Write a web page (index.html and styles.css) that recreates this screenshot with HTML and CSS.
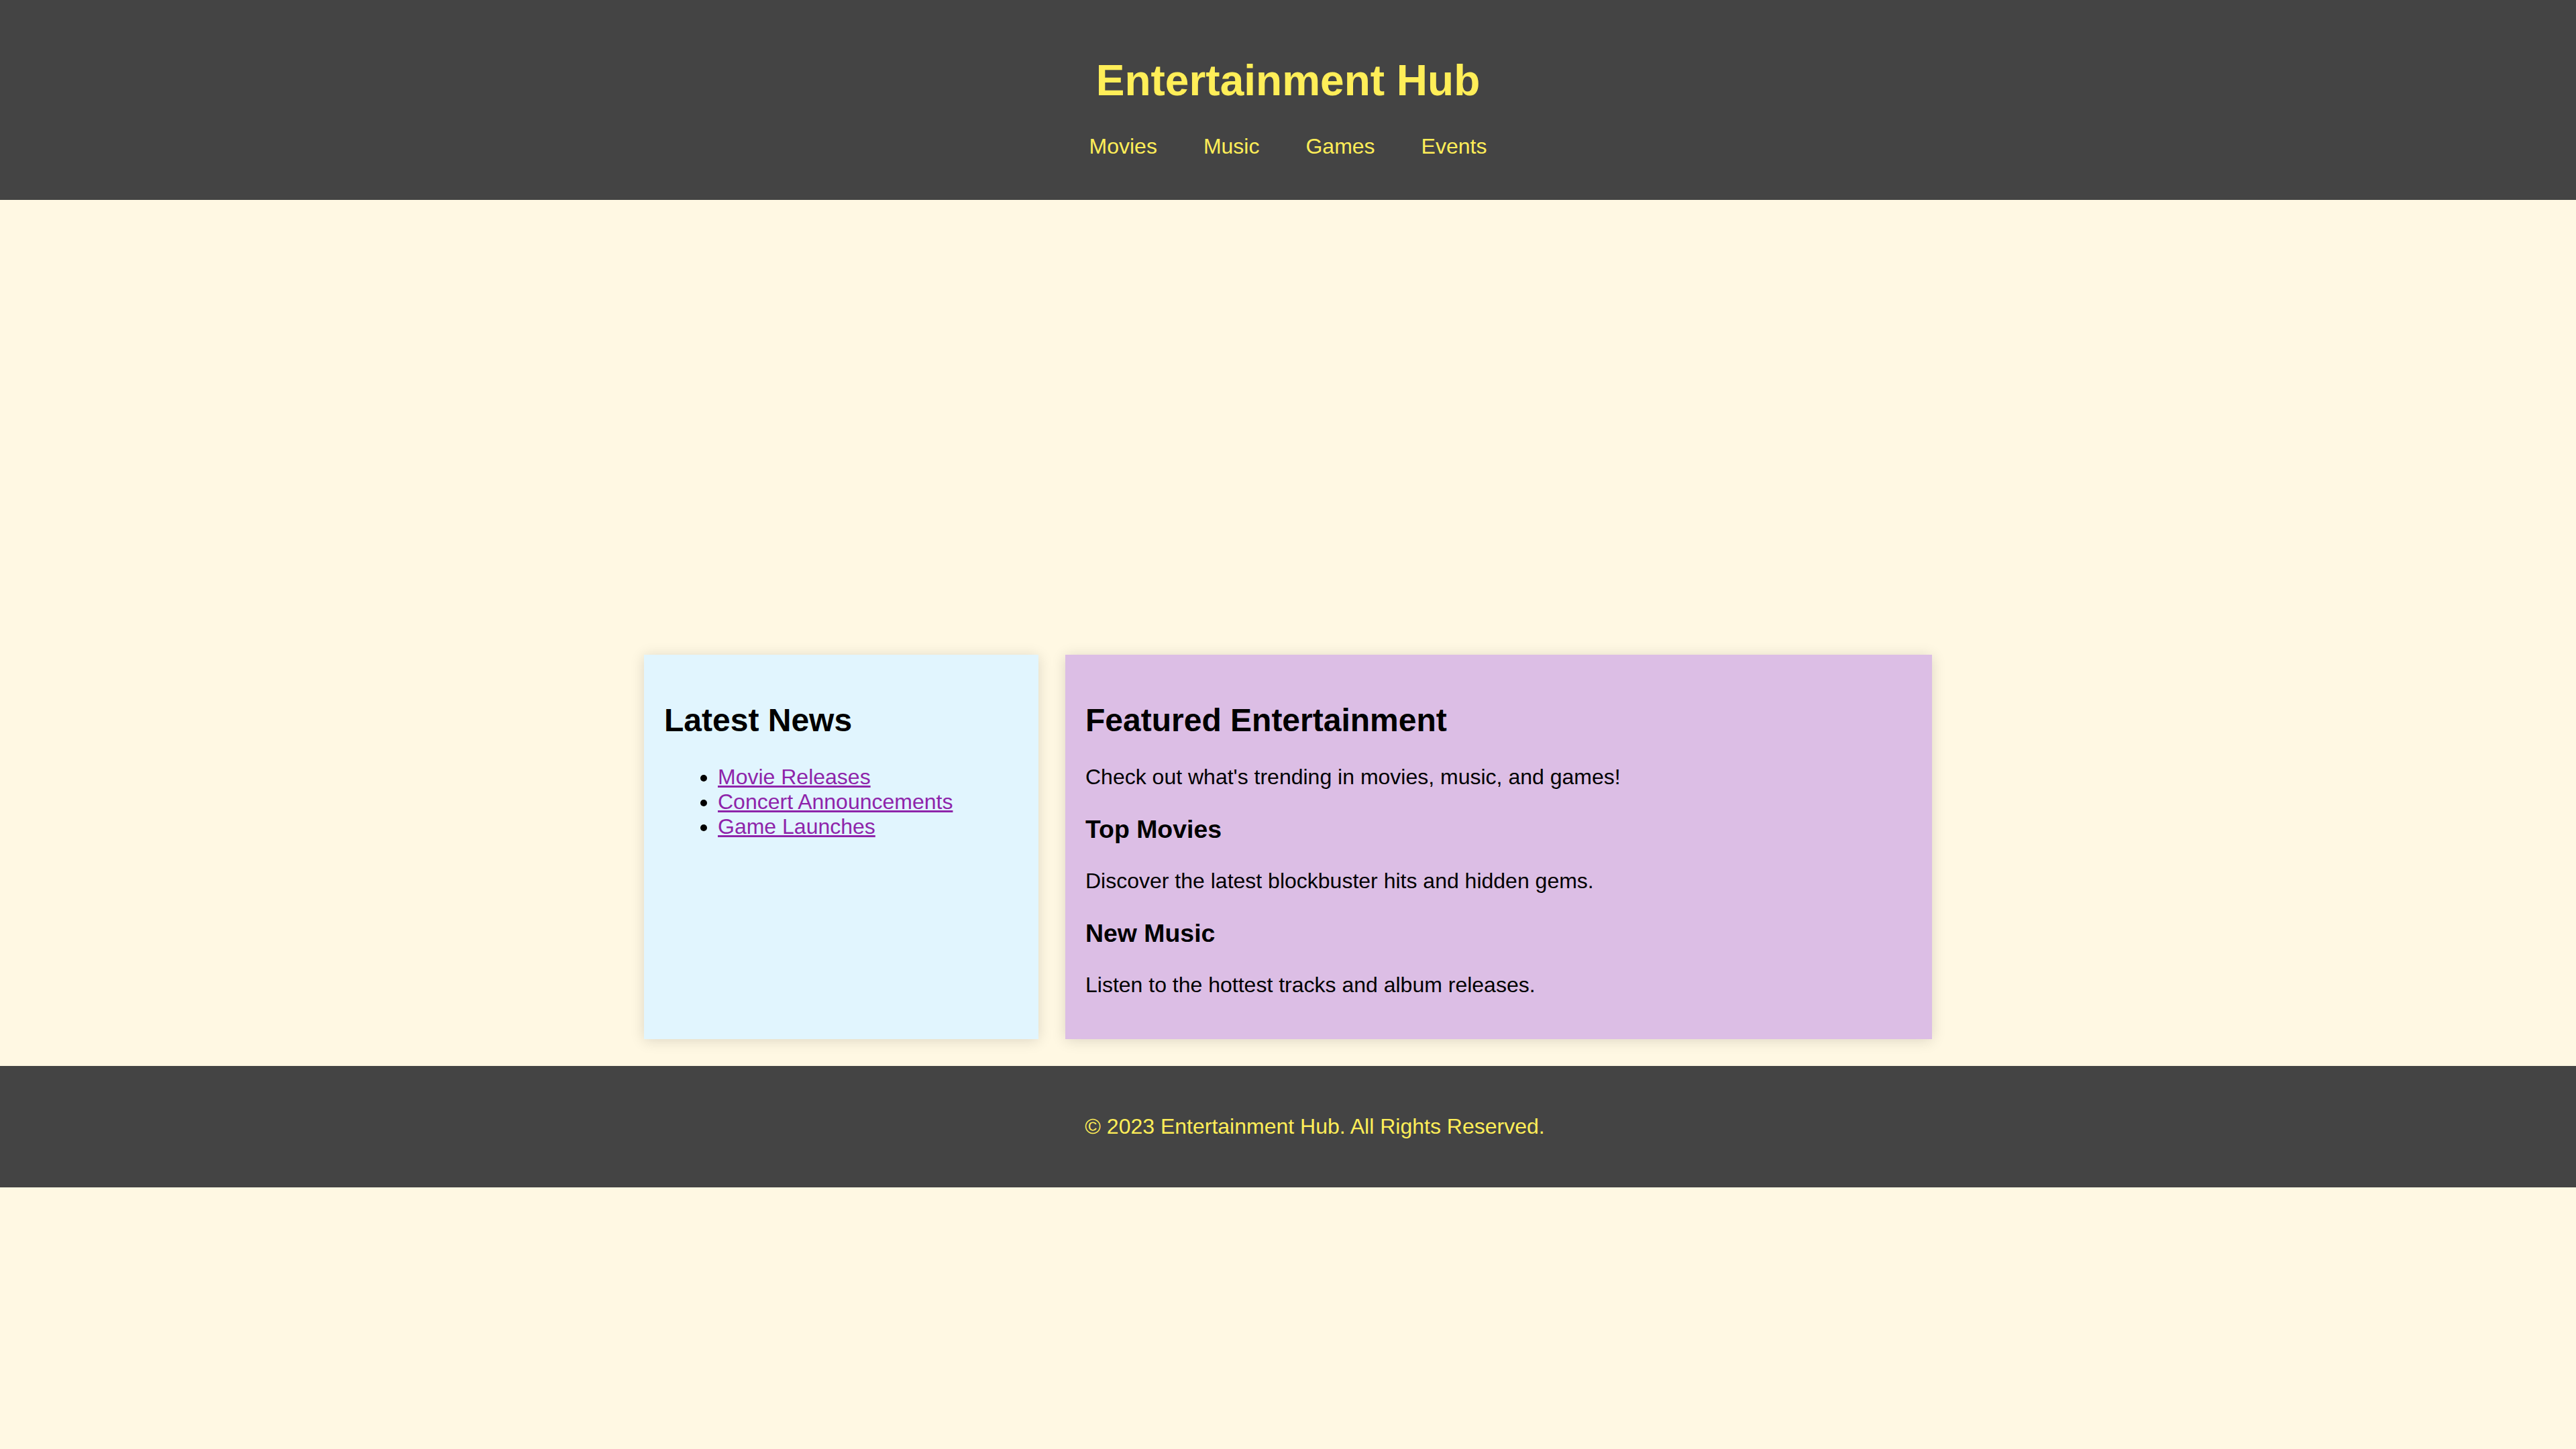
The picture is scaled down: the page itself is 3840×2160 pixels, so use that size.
FILE: index.html
```html
<!DOCTYPE html>
<html lang="en">
<head>
<meta charset="utf-8">
<title>Entertainment Hub</title>
<link rel="stylesheet" href="styles.css">
</head>
<body>
<header class="site-header">
  <h1 class="site-title">Entertainment Hub</h1>
  <nav>
    <ul class="nav-list">
      <li><a class="nav-link" href="#">Movies</a></li>
      <li><a class="nav-link" href="#">Music</a></li>
      <li><a class="nav-link" href="#">Games</a></li>
      <li><a class="nav-link" href="#">Events</a></li>
    </ul>
  </nav>
</header>
<main class="page">
  <section class="hero"></section>
  <div class="content">
    <aside class="card sidebar">
      <h2>Latest News</h2>
      <ul class="news-list">
        <li><a href="#">Movie Releases</a></li>
        <li><a href="#">Concert Announcements</a></li>
        <li><a href="#">Game Launches</a></li>
      </ul>
    </aside>
    <section class="card featured">
      <h2>Featured Entertainment</h2>
      <p>Check out what's trending in movies, music, and games!</p>
      <h3>Top Movies</h3>
      <p>Discover the latest blockbuster hits and hidden gems.</p>
      <h3>New Music</h3>
      <p>Listen to the hottest tracks and album releases.</p>
    </section>
  </div>
</main>
<footer class="site-footer">
  <p>&copy; 2023 Entertainment Hub. All Rights Reserved.</p>
</footer>
</body>
</html>
```
FILE: styles.css
```css
html, body {
  margin: 0;
  padding: 0;
}
body {
  background: #fff8e3;
  font-family: "Liberation Sans", Arial, sans-serif;
  font-size: 32px;
  color: #000;
}
.site-header {
  background: #444444;
  padding: 40px 0 61px;
  text-align: center;
}
.site-title {
  color: #ffee58;
  font-size: 64px;
  font-weight: bold;
  margin: 42.88px 0;
}
.nav-list {
  list-style: none;
  margin: 0;
  padding: 0;
  display: flex;
  justify-content: center;
  gap: 69px;
}
.nav-link {
  color: #ffee58;
  text-decoration: none;
}
.page {
  padding: 40px 0;
}
.hero {
  height: 598px;
  margin-bottom: 40px;
}
.content {
  width: 1920px;
  margin: 0 auto;
  display: flex;
  gap: 40px;
  align-items: stretch;
}
.card {
  box-sizing: border-box;
  padding: 30px;
  box-shadow: 0 2px 20px rgba(0, 0, 0, 0.14);
}
.card h2 {
  font-size: 48px;
  margin: 39.84px 0;
}
.card h3 {
  font-size: 37.44px;
  margin: 37.44px 0;
}
.card p {
  margin: 32px 0;
}
.sidebar {
  width: 588px;
  flex: none;
  background: #e1f5fe;
}
.featured {
  flex: 1;
  background: #dcbee5;
}
.news-list {
  margin: 32px 0;
  padding-left: 80px;
}
.news-list a {
  color: #8e24aa;
  text-decoration: underline;
}
.site-footer {
  background: #444444;
  color: #ffee58;
  text-align: center;
  padding: 40px 0 40px 80px;
}
.site-footer p {
  margin: 32px 0;
}
```
